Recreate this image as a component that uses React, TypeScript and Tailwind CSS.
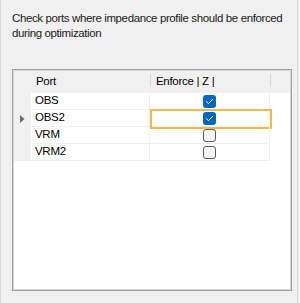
import React from "react";

type Row = { port: string; enforce: boolean };

const ROWS: Row[] = [
  { port: "OBS", enforce: true },
  { port: "OBS2", enforce: true },
  { port: "VRM", enforce: false },
  { port: "VRM2", enforce: false },
];

const CURRENT = 1;

function CheckBox({ checked }: { checked: boolean }) {
  if (checked) {
    return (
      <span className="flex h-[13px] w-[13px] items-center justify-center rounded-[3px] bg-[#0067c0]">
        <svg width="9" height="9" viewBox="0 0 9 9" fill="none">
          <path d="M1.5 4.8 L3.5 6.6 L7.6 2.4" stroke="#ffffff" strokeWidth="1" strokeLinecap="round" strokeLinejoin="round" />
        </svg>
      </span>
    );
  }
  return <span className="block h-[13px] w-[13px] rounded-[3px] border border-[#5c5c5c] bg-[#f7f7f7]" />;
}

export default function App() {
  return (
    <div className="h-[303px] w-[300px] bg-[#f0f0f0] text-[11.5px] tracking-[-0.3px] text-[#000] [font-family:'Segoe_UI','Liberation_Sans',sans-serif]">
      <div className="flex h-full w-[298px] flex-col border-x border-[#d9d9d9] pl-[11px] pt-[11px]">
        <p className="w-[284px] whitespace-nowrap leading-[15px] tracking-[-0.38px] text-[#1a1a1a]">
          Check ports where impedance profile should be enforced
          <br />
          during optimization
        </p>

        <div className="mt-[28px] flex h-[222px] w-[280px] flex-col border border-[#a0a0a0] bg-white shadow-[inset_0_0_0_1px_#d6d6d6] p-px">
          {/* header */}
          <div className="flex h-[22px] shrink-0 items-center bg-[#f0f0f0]">
            <div className="w-[17px]" />
            <div className="flex h-full w-[119px] items-center pl-[5px]">Port</div>
            <div className="flex h-full w-[120px] items-center border-l border-[#d4d4d4] pl-[5px] [border-image:linear-gradient(to_bottom,transparent_4px,#d4d4d4_4px,#d4d4d4_16px,transparent_16px)_1]">
              Enforce | Z |
            </div>
            <div className="h-full flex-1 border-l border-[#d4d4d4] [border-image:linear-gradient(to_bottom,transparent_4px,#d4d4d4_4px,#d4d4d4_16px,transparent_16px)_1]" />
          </div>

          {/* rows */}
          {ROWS.map((row, i) => (
            <div key={row.port} className="flex h-[17px] shrink-0">
              <div className="flex w-[17px] items-center justify-center bg-[#f0f0f0]">
                {i === CURRENT && (
                  <svg width="5" height="8" viewBox="0 0 5 8">
                    <path d="M0 0 L4.5 4 L0 8 Z" fill="#6d6d6d" />
                  </svg>
                )}
              </div>
              <div className="flex w-[119px] items-center border-b border-r border-[#f0f0f0] pl-[4px]">
                {row.port}
              </div>
              <div className="relative flex w-[120px] items-center justify-center border-b border-r border-[#f0f0f0]">
                <CheckBox checked={row.enforce} />
                {i === CURRENT && (
                  <span className="absolute -top-px left-0 h-[20px] w-[122px] border-2 border-[#f0ba48]" />
                )}
              </div>
            </div>
          ))}
        </div>
      </div>
    </div>
  );
}
